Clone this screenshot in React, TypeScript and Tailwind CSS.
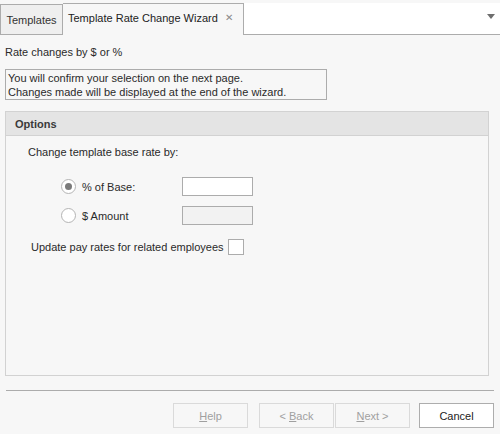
import React from 'react';

const font = { fontFamily: '"Liberation Sans", Arial, sans-serif' };

const Radio: React.FC<{ checked?: boolean }> = ({ checked }) => (
  <span className="w-[15px] h-[15px] rounded-full border border-[#b4b4b4] bg-white flex items-center justify-center shrink-0">
    {checked && <span className="w-[7px] h-[7px] rounded-full bg-[#7a7a7a]" />}
  </span>
);

const WizButton: React.FC<{ label: React.ReactNode; enabled?: boolean }> = ({ label, enabled }) => (
  <button
    className={
      enabled
        ? 'w-[75px] h-[25px] border border-[#adadad] bg-white text-[11px] leading-[14px] text-[#222]'
        : 'w-[75px] h-[25px] border border-[#dadada] bg-[#f7f7f7] text-[11px] leading-[14px] text-[#a0a0a0]'
    }
  >
    {label}
  </button>
);

export default function App() {
  return (
    <div
      className="w-[500px] h-[434px] bg-[#f7f7f7] text-[11px] leading-[14px] text-[#2a2a2a] flex flex-col overflow-hidden whitespace-nowrap"
      style={font}
    >
      {/* tab strip */}
      <div className="h-[35px] flex items-end bg-[#f7f7f7] shrink-0">
        <div className="w-[63px] h-[31px] border border-[#acacac] bg-[#efefef] flex items-center justify-center text-[#333]">
          Templates
        </div>
        <div className="w-[181px] h-[32px] border-t border-r border-[#acacac] bg-[#f7f7f7] flex items-center pl-[5px] pb-[3px] text-[#222]">
          <span>Template Rate Change Wizard</span>
          <span className="ml-auto mr-[10px] text-[10px] text-[#8a8a8a]">✕</span>
        </div>
        <div className="flex-1 h-[32px] bg-white border-b border-[#acacac] flex justify-end pt-[11px] pr-[5px]">
          <svg width="8" height="5" viewBox="0 0 8 5">
            <path d="M0 0H8L4 5Z" fill="#6e6e6e" />
          </svg>
        </div>
      </div>

      <div className="flex flex-col px-[5px]">
        <div className="mt-[10px]">Rate changes by $ or %</div>
        <div className="mt-[10px] w-[322px] h-[31px] border border-[#acacac] px-[2px] pt-px">
          <div>You will confirm your selection on the next page.</div>
          <div>Changes made will be displayed at the end of the wizard.</div>
        </div>

        {/* options group */}
        <div className="mt-[11px] w-[484px] h-[265px] border border-[#d2d2d2] flex flex-col">
          <div className="h-[24px] bg-[#e4e4e4] border-b border-[#d2d2d2] flex items-center pl-[9px] font-bold text-[#3a3a3a]">
            Options
          </div>
          <div className="pl-[22px] pt-[9px] flex flex-col">
            <div>Change template base rate by:</div>
            <div className="mt-[18px] flex items-center h-[19px] pl-[33px]">
              <Radio checked />
              <span className="ml-[6px] w-[100px]">% of Base:</span>
              <span className="w-[71px] h-[19px] border border-[#acacac] bg-white" />
            </div>
            <div className="mt-[10px] flex items-center h-[19px] pl-[33px]">
              <Radio />
              <span className="ml-[6px] w-[100px]">$ Amount</span>
              <span className="w-[71px] h-[19px] border border-[#acacac] bg-[#f2f2f2]" />
            </div>
            <div className="mt-[14px] flex items-center pl-[3px]">
              <span>Update pay rates for related employees</span>
              <span className="ml-[4px] w-[16px] h-[16px] border border-[#acacac] bg-white" />
            </div>
          </div>
        </div>

        <div className="mt-[14px] h-px bg-[#acacac] ml-[1px] w-[488px]" />

        <div className="mt-[12px] flex items-center">
          <div className="ml-[168px]">
            <WizButton label={<><u>H</u>elp</>} />
          </div>
          <div className="ml-[11px]">
            <WizButton label={<>&lt; <u>B</u>ack</>} />
          </div>
          <div className="ml-[1px]">
            <WizButton label={<><u>N</u>ext &gt;</>} />
          </div>
          <div className="ml-[9px]">
            <WizButton label="Cancel" enabled />
          </div>
        </div>
      </div>
    </div>
  );
}
